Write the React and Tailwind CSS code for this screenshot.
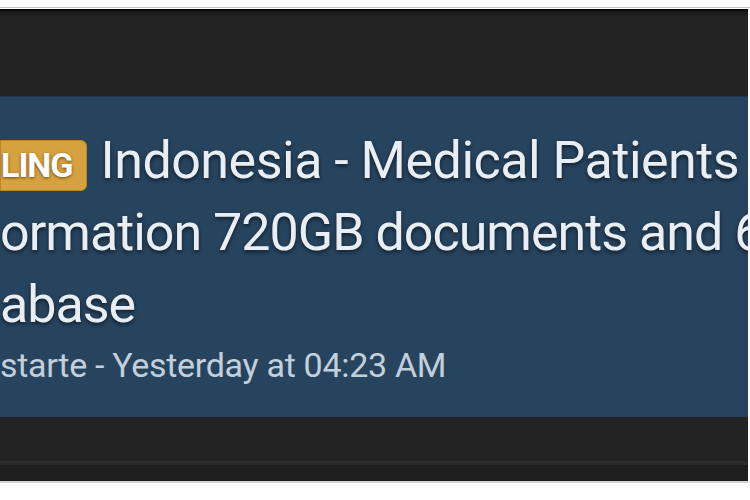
export default function App() {
  return (
    <div className="w-[750px] h-[500px] bg-white overflow-hidden" style={{ fontFamily: 'Roboto, "Liberation Sans", sans-serif' }}>
      <div className="h-[7px] bg-white" />
      <div className="h-[1px] bg-[#c4c4c4]" />
      <div className="h-[1px] bg-white" />
      <div className="w-[748px] h-[474px] flex flex-col bg-[#232323] border-b-2 border-[#d4d4d4] overflow-hidden">
        <div className="h-[2px] bg-[#0a0a0a]" />
        <div className="h-[6px] bg-gradient-to-b from-[#161616] to-[#232323]" />
        <div className="h-[79px] bg-[#232323]" />

        {/* thread card */}
        <div className="h-[321px] bg-[#27445f] border-t border-[#1f364c] pt-[28px] overflow-hidden">
          <div className="flex items-center h-[72px] whitespace-nowrap">
            <span className="mt-[8px] h-[51px] flex items-center pl-0 pr-[13px] bg-[#d6a23e] border border-[#b9862b] rounded-r-[6px] text-[34px] tracking-[-1px] font-bold text-white [text-shadow:0_1px_3px_rgba(60,30,0,0.7)]">
              LING
            </span>
            <span className="ml-[14px] text-[52px] leading-[72px] tracking-[-0.5px] text-[#e8eef3] [text-shadow:0_2px_4px_rgba(0,0,0,0.6)]">
              Indonesia - Medical Patients
            </span>
          </div>
          <div className="h-[72px] whitespace-nowrap text-[52px] leading-[72px] tracking-[-1px] text-[#e8eef3] [text-shadow:0_2px_4px_rgba(0,0,0,0.6)]">
            ormation 720GB documents and 6
          </div>
          <div className="h-[72px] whitespace-nowrap text-[52px] leading-[72px] tracking-[-1px] text-[#e8eef3] [text-shadow:0_2px_4px_rgba(0,0,0,0.6)]">
            abase
          </div>
          <div className="mt-[2px] whitespace-nowrap text-[34px] leading-[44px] tracking-[-0.3px] text-[#c3cfdb]">
            starte - Yesterday at 04:23 AM
          </div>
        </div>

        <div className="h-[44px] bg-[#232323]" />
        <div className="h-[4px] bg-[#2c2c2c]" />
        <div className="flex-1 bg-[#1e1e1e]" />
      </div>
    </div>
  );
}
